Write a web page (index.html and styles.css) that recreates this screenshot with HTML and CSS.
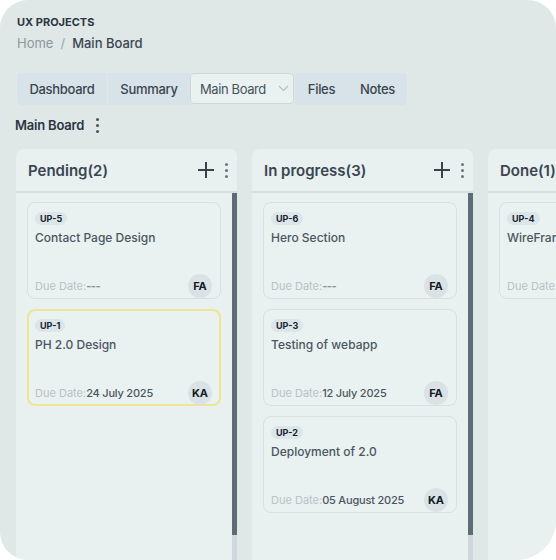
FILE: index.html
```html
<!DOCTYPE html>
<html>
<head>
<meta charset="utf-8">
<link rel="stylesheet" href="styles.css">
</head>
<body>
<div class="frame">
  <div class="title">UX PROJECTS</div>
  <div class="crumbs"><span class="crumb-home">Home</span><span class="crumb-sep">/</span><span class="crumb-cur">Main Board</span></div>
  <div class="tabs">
    <div class="tab tab-dash">Dashboard</div>
    <div class="tab tab-sum">Summary</div>
    <div class="tab-select"><span>Main Board</span>
      <svg class="chev" width="11" height="7" viewBox="0 0 11 7"><path d="M1 1 L5.5 5.5 L10 1" fill="none" stroke="#b3bcc0" stroke-width="1.1"/></svg>
    </div>
    <div class="tab tab-files">Files</div>
    <div class="tab tab-notes">Notes</div>
  </div>
  <div class="board-title">Main Board <span class="vdots small"><i></i><i></i><i></i></span></div>
  <div class="board">
    <div class="col">
      <div class="col-head">
        <span class="col-name">Pending(2)</span>
        <span class="col-actions">
          <svg class="plus" width="18" height="18" viewBox="0 0 18 18"><path d="M9 1 V17 M1 9 H17" stroke="#38434d" stroke-width="2" fill="none"/></svg>
          <span class="vdots"><i></i><i></i><i></i></span>
        </span>
      </div>
      <div class="col-body">
        <div class="cards">
          <div class="card">
            <span class="badge">UP-5</span>
            <div class="card-title">Contact Page Design</div>
            <div class="card-foot"><span class="due"><span class="due-label">Due Date:</span><span class="due-dash">---</span></span><span class="avatar">FA</span></div>
          </div>
          <div class="card card-hl">
            <span class="badge">UP-1</span>
            <div class="card-title">PH 2.0 Design</div>
            <div class="card-foot"><span class="due"><span class="due-label">Due Date:</span><span class="due-val">24 July 2025</span></span><span class="avatar">KA</span></div>
          </div>
        </div>
        <div class="scroll"><div class="thumb"></div></div>
      </div>
    </div>
    <div class="col">
      <div class="col-head">
        <span class="col-name">In progress(3)</span>
        <span class="col-actions">
          <svg class="plus" width="18" height="18" viewBox="0 0 18 18"><path d="M9 1 V17 M1 9 H17" stroke="#38434d" stroke-width="2" fill="none"/></svg>
          <span class="vdots"><i></i><i></i><i></i></span>
        </span>
      </div>
      <div class="col-body">
        <div class="cards">
          <div class="card">
            <span class="badge">UP-6</span>
            <div class="card-title">Hero Section</div>
            <div class="card-foot"><span class="due"><span class="due-label">Due Date:</span><span class="due-dash">---</span></span><span class="avatar">FA</span></div>
          </div>
          <div class="card">
            <span class="badge">UP-3</span>
            <div class="card-title">Testing of webapp</div>
            <div class="card-foot"><span class="due"><span class="due-label">Due Date:</span><span class="due-val">12 July 2025</span></span><span class="avatar">FA</span></div>
          </div>
          <div class="card">
            <span class="badge">UP-2</span>
            <div class="card-title">Deployment of 2.0</div>
            <div class="card-foot"><span class="due"><span class="due-label">Due Date:</span><span class="due-val">05 August 2025</span></span><span class="avatar">KA</span></div>
          </div>
        </div>
        <div class="scroll"><div class="thumb"></div></div>
      </div>
    </div>
    <div class="col">
      <div class="col-head">
        <span class="col-name">Done(1)</span>
        <span class="col-actions">
          <svg class="plus" width="18" height="18" viewBox="0 0 18 18"><path d="M9 1 V17 M1 9 H17" stroke="#38434d" stroke-width="2" fill="none"/></svg>
          <span class="vdots"><i></i><i></i><i></i></span>
        </span>
      </div>
      <div class="col-body">
        <div class="cards">
          <div class="card">
            <span class="badge">UP-4</span>
            <div class="card-title">WireFrame</div>
            <div class="card-foot"><span class="due"><span class="due-label">Due Date:</span><span class="due-dash">---</span></span><span class="avatar">KA</span></div>
          </div>
        </div>
        <div class="scroll"><div class="thumb"></div></div>
      </div>
    </div>
  </div>
</div>
</body>
</html>
```

FILE: styles.css
```css
* { box-sizing: border-box; }
html, body { margin: 0; padding: 0; background: #ffffff; }
body { font-family: Inter, "Noto Sans", sans-serif; color: #38434d; }

.frame {
  width: 556px;
  height: 560px;
  background: #dfe7e7;
  border-radius: 28px 28px 40px 28px;
  overflow: hidden;
  padding: 15px 0 0 16px;
  display: flex;
  flex-direction: column;
}

.title {
  font-size: 11px;
  line-height: 14px;
  font-weight: 700;
  color: #2c3540;
  padding-left: 1px;
}

.crumbs {
  margin-top: 5px;
  font-size: 13px;
  line-height: 18px;
  padding-left: 1px;
  display: flex;
  gap: 7px;
}
.crumb-home { color: #8d979e; }
.crumb-sep { color: #9aa3a9; }
.crumb-cur { color: #3c4650; font-weight: 500; }

.tabs {
  margin-top: 21px;
  margin-left: 1px;
  display: flex;
  align-items: stretch;
  height: 32px;
  align-self: flex-start;
}
.tab {
  background: #d7e3e8;
  font-size: 13px;
  font-weight: 500;
  letter-spacing: -0.3px;
  color: #3a4550;
  display: flex;
  align-items: center;
  justify-content: center;
  white-space: nowrap;
}
.tab-dash { width: 90px; border-radius: 4px 0 0 4px; margin-right: 1px; }
.tab-sum { width: 82px; }
.tab-files { width: 53px; margin-left: 1px; }
.tab-notes { width: 59px; border-radius: 0 4px 4px 0; }
.tab-select {
  width: 104px;
  height: 31px;
  background: #e9f1f1;
  border: 1px solid #cdd7da;
  border-radius: 4px;
  font-size: 13px;
  letter-spacing: -0.4px;
  color: #46515b;
  display: flex;
  align-items: center;
  padding-left: 9px;
  white-space: nowrap;
}
.chev { margin-left: 12px; flex: none; }

.board-title {
  margin-top: 11px;
  font-size: 13px;
  line-height: 18px;
  font-weight: 600;
  letter-spacing: -0.2px;
  color: #2c3540;
  display: flex;
  align-items: center;
  gap: 12px;
  margin-left: -1px;
}

.vdots {
  display: inline-flex;
  flex-direction: column;
  gap: 3px;
  align-items: center;
}
.vdots i {
  display: block;
  width: 3px;
  height: 3px;
  border-radius: 50%;
  background: #6b757d;
}
.vdots.small i { background: #4a545d; }

.board {
  margin-top: 15px;
  display: flex;
  gap: 15px;
  flex: 1;
  min-height: 0;
}

.col {
  flex: 0 0 221px;
  width: 221px;
  background: #e8f0f0;
  border-radius: 8px 8px 0 0;
  display: flex;
  flex-direction: column;
}
.col-head {
  height: 44px;
  border-bottom: 2px solid #d6e0e2;
  display: flex;
  align-items: center;
  justify-content: space-between;
  padding: 0 9px 0 12px;
  flex: none;
}
.col-name {
  font-size: 15px;
  font-weight: 600;
  color: #3a4550;
  white-space: nowrap;
}
.col-actions {
  display: flex;
  align-items: center;
  gap: 10px;
}

.col-body {
  flex: 1;
  display: flex;
  min-height: 0;
}
.cards {
  flex: 1;
  padding: 9px 11px 0 11px;
  display: flex;
  flex-direction: column;
  gap: 10px;
}
.scroll {
  width: 5px;
  background: #cfd8dc;
  flex: none;
}
.thumb {
  height: 342px;
  background: #5f6b75;
}

.card {
  height: 97px;
  border: 1px solid #d6e1e4;
  border-radius: 8px;
  background: #e9f1f1;
  padding: 9px 7px 1px 7px;
  display: flex;
  flex-direction: column;
  align-items: flex-start;
  flex: none;
}
.card-hl { border: 2px solid #ebe594; padding: 8px 6px 0 6px; }

.badge {
  background: #dbe6ea;
  border-radius: 7px;
  font-size: 9px;
  line-height: 13px;
  font-weight: 700;
  color: #1c222b;
  padding: 0 5px;
}
.card-title {
  margin-top: 5px;
  font-size: 12px;
  line-height: 16px;
  font-weight: 500;
  color: #4b5660;
  white-space: nowrap;
}
.card-foot {
  margin-top: auto;
  width: 100%;
  display: flex;
  align-items: center;
  justify-content: space-between;
  height: 22px;
}
.due {
  font-size: 11px;
  color: #bac2c6;
  white-space: nowrap;
}
.due-dash { color: #8a949b; font-weight: 700; letter-spacing: -0.5px; }
.due-val { color: #4b5660; font-weight: 500; letter-spacing: -0.2px; }
.avatar {
  width: 24px;
  height: 24px;
  border-radius: 50%;
  background: #dae2e5;
  color: #141a22;
  font-size: 11px;
  font-weight: 700;
  display: flex;
  align-items: center;
  justify-content: center;
  margin-right: 1px;
  flex: none;
}
```
